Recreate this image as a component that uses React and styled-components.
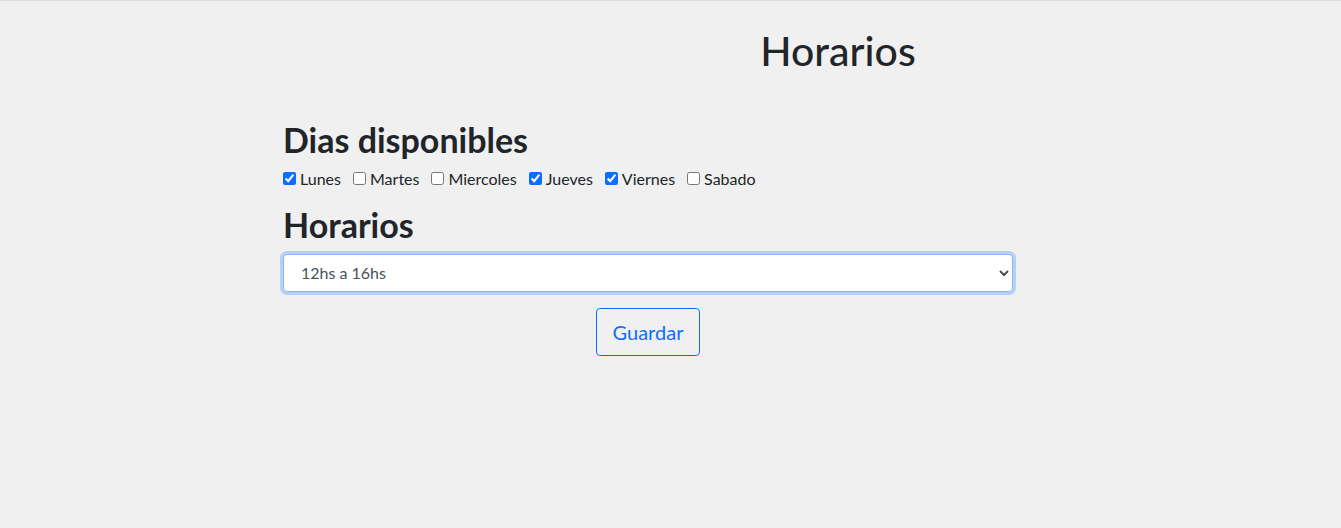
import React, { useState } from 'react'
import styled, { createGlobalStyle } from 'styled-components'

const GlobalStyle = createGlobalStyle`
  body {
    margin: 0;
    background: #f0f0f0;
    color: #212529;
    font-family: Lato, "Open Sans", sans-serif;
    border-top: 1px solid #dcdcdc;
  }
`

const Page = styled.div`
  min-height: 527px;
`

const Header = styled.header`
  display: flex;
  justify-content: center;
  padding: 25px 0 0 335px;
`

const Title = styled.h1`
  margin: 0;
  font-size: 41px;
  font-weight: 500;
  line-height: 1.2;
`

const Form = styled.form`
  width: 730px;
  margin: 45px 0 0 283px;
  display: flex;
  flex-direction: column;
`

const SectionTitle = styled.h2`
  margin: 0 0 8px;
  font-size: 34px;
  font-weight: 700;
  line-height: 1.2;
`

const Days = styled.div`
  display: flex;
  gap: 12px;
  margin-bottom: 17px;
`

const Day = styled.label`
  display: flex;
  align-items: center;
  gap: 4px;
  font-size: 16px;
  color: #212529;
`

const Check = styled.input`
  margin: 0;
  width: 13px;
  height: 13px;
  accent-color: #0b6efd;
`

const Select = styled.select`
  height: 38px;
  padding: 0 12px 0 13px;
  font-family: inherit;
  font-size: 16px;
  color: #495057;
  background: #fff;
  border: 1px solid #86b7fe;
  border-radius: 4px;
  box-shadow: 0 0 0 3px rgba(13, 110, 253, 0.25);
  outline: none;
`

const Actions = styled.div`
  display: flex;
  justify-content: center;
  margin-top: 16px;
`

const Button = styled.button`
  padding: 0 16px;
  height: 48px;
  font-family: inherit;
  font-size: 20px;
  color: #0d6efd;
  background: transparent;
  border: 1px solid #0d6efd;
  border-radius: 4px;
  cursor: pointer;
`

const days = [
  ['Lunes', true],
  ['Martes', false],
  ['Miercoles', false],
  ['Jueves', true],
  ['Viernes', true],
  ['Sabado', false],
]

const App = () => {
  const [checked, setChecked] = useState(days.map(d => d[1]))
  const toggle = i => setChecked(c => c.map((v, j) => (j === i ? !v : v)))

  return (
    <Page>
      <GlobalStyle />
      <Header>
        <Title>Horarios</Title>
      </Header>
      <Form onSubmit={e => e.preventDefault()}>
        <SectionTitle>Dias disponibles</SectionTitle>
        <Days>
          {days.map(([name], i) => (
            <Day key={name}>
              <Check type="checkbox" checked={checked[i]} onChange={() => toggle(i)} />
              {name}
            </Day>
          ))}
        </Days>
        <SectionTitle>Horarios</SectionTitle>
        <Select defaultValue="12a16">
          <option value="8a12">8hs a 12hs</option>
          <option value="12a16">12hs a 16hs</option>
          <option value="16a20">16hs a 20hs</option>
        </Select>
        <Actions>
          <Button type="submit">Guardar</Button>
        </Actions>
      </Form>
    </Page>
  )
}

export default App
